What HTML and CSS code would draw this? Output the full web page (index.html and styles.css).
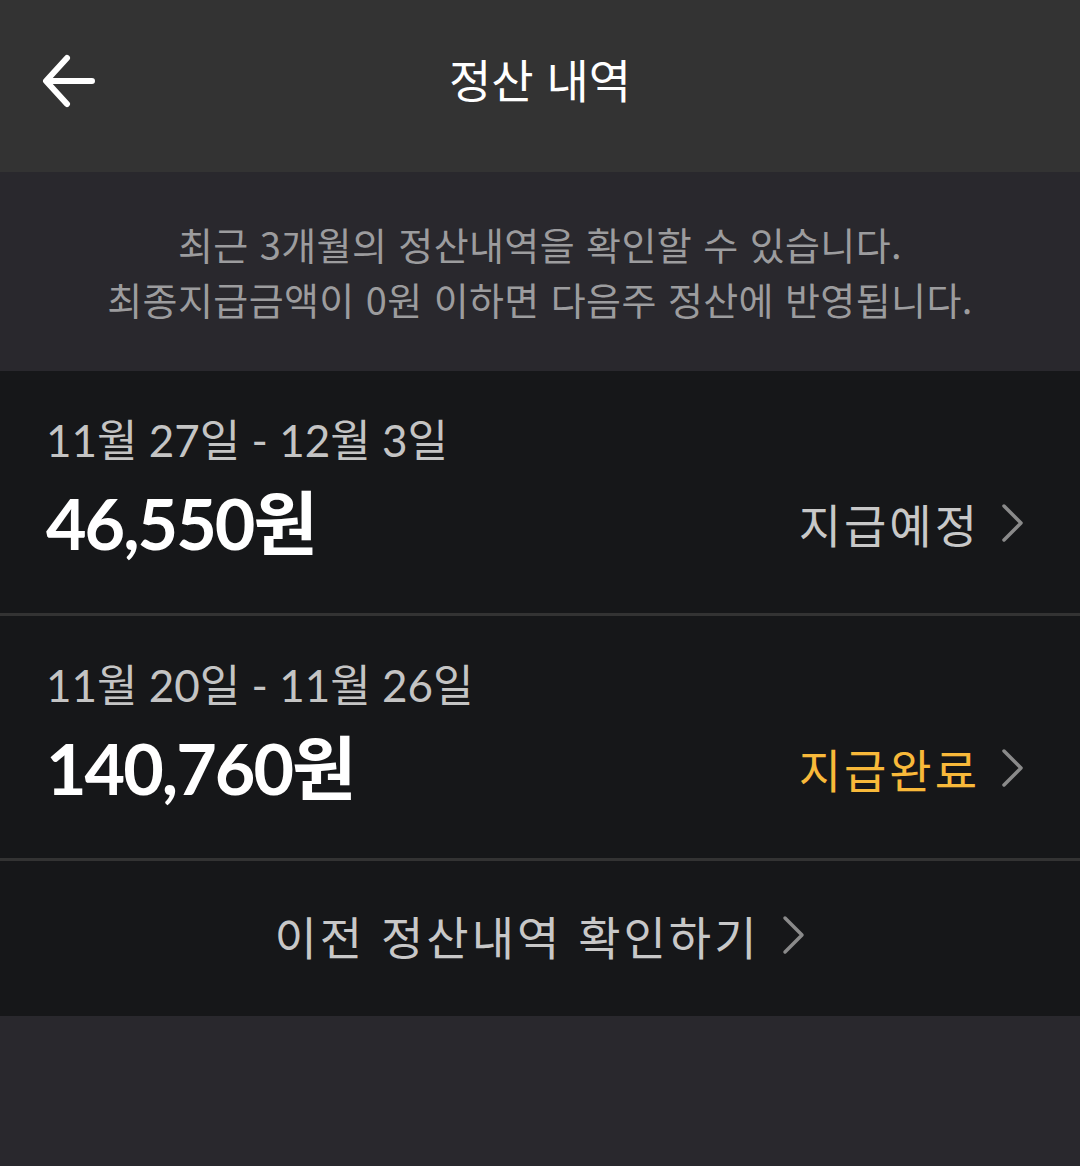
FILE: index.html
```html
<!doctype html>
<html lang="ko">
  <head>
    <meta charset="UTF-8" />
    <meta name="viewport" content="width=device-width, initial-scale=1.0" />
    <title>정산 내역</title>
    <link rel="stylesheet" href="styles.css">
  </head>

  <body>
    <div class="page">
      <div class="header">
        <div class="header-back">
          <svg width="56" height="54" viewBox="0 0 56 54">
            <path d="M51 27H7M26 4L5 27l21 23" fill="none" stroke="#fff" stroke-width="6" stroke-linecap="round" stroke-linejoin="round" />
          </svg>
        </div>
        <div class="header-title">정산 내역</div>
      </div>

      <div class="notice">
        <p>최근 3개월의 정산내역을 확인할 수 있습니다.</p>
        <p>최종지급금액이 0원 이하면 다음주 정산에 반영됩니다.</p>
      </div>

      <div class="list">
        <div class="item">
          <div class="item-info">
            <div class="item-date">11월 27일 - 12월 3일</div>
            <div class="item-amount">46,550원</div>
          </div>
          <div class="item-status">
            지급예정
            <svg class="chevron" width="24" height="40" viewBox="0 0 24 40">
              <path d="M4 3l17 17L4 37" fill="none" stroke="#8a8a8a" stroke-width="3.5" stroke-linecap="round" stroke-linejoin="round" />
            </svg>
          </div>
        </div>
        <div class="item">
          <div class="item-info">
            <div class="item-date">11월 20일 - 11월 26일</div>
            <div class="item-amount">140,760원</div>
          </div>
          <div class="item-status item-status-done">
            지급완료
            <svg class="chevron" width="24" height="40" viewBox="0 0 24 40">
              <path d="M4 3l17 17L4 37" fill="none" stroke="#8a8a8a" stroke-width="3.5" stroke-linecap="round" stroke-linejoin="round" />
            </svg>
          </div>
        </div>
        <div class="more">
          이전 정산내역 확인하기
          <svg class="chevron" width="24" height="40" viewBox="0 0 24 40">
            <path d="M4 3l17 17L4 37" fill="none" stroke="#8a8a8a" stroke-width="3.5" stroke-linecap="round" stroke-linejoin="round" />
          </svg>
        </div>
      </div>
    </div>
  </body>
</html>
```

FILE: styles.css
```css
html,
body {
  width: 100%;
  height: 100%;
  padding: 0;
  margin: 0;
  overflow: hidden;
}

body {
  background-color: #29282d;
  font-family: Lato, "Noto Sans CJK KR", sans-serif;
  color: #fff;
}

.header {
  height: 172px;
  background-color: #333333;
  display: flex;
  align-items: center;
  justify-content: center;
  position: relative;
}

.header-back {
  position: absolute;
  left: 41px;
  top: 54px;
  display: flex;
}

.header-title {
  font-family: "Noto Sans CJK KR", sans-serif;
  font-size: 46px;
  margin-top: -16px;
}

.notice {
  height: 199px;
  box-sizing: border-box;
  padding-top: 44px;
  background-color: #29282d;
  color: #9c9c9e;
  text-align: center;
  font-family: "Noto Sans CJK KR", sans-serif;
  font-size: 38px;
  letter-spacing: 0.4px;
  line-height: 55px;

  p {
    margin: 0;
  }
}

.list {
  background-color: #161719;
}

.item {
  height: 245px;
  box-sizing: border-box;
  padding: 0 56px 0 46px;
  display: flex;
  align-items: center;
  justify-content: space-between;
  border-bottom: 3px solid #333333;
}

.item-info {
  display: flex;
  flex-direction: column;
  gap: 12px;
  margin-top: -6px;
}

.item-date {
  font-size: 44px;
  color: #c4c4c4;
  line-height: 56px;
}

.item-amount {
  font-size: 70px;
  font-weight: 700;
  letter-spacing: -2px;
  line-height: 86px;
}

.item-status {
  display: flex;
  align-items: center;
  gap: 20px;
  font-family: "Noto Sans CJK KR", sans-serif;
  font-size: 46px;
  letter-spacing: 3px;
  color: #c8c8c8;
  margin-top: 62px;
}

.item-status-done {
  color: #f8b93a;
}

.more {
  height: 155px;
  display: flex;
  align-items: center;
  justify-content: center;
  gap: 22px;
  font-family: "Noto Sans CJK KR", sans-serif;
  font-size: 46px;
  letter-spacing: 3px;
  color: #c8c8c8;
  padding-bottom: 8px;
  box-sizing: border-box;
}
```
